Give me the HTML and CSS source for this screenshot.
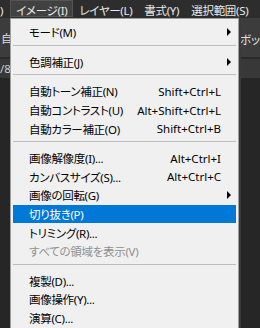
FILE: index.html
```html
<!DOCTYPE html>
<html lang="ja">
<head>
<meta charset="utf-8">
<link rel="stylesheet" href="styles.css">
</head>
<body>
<div class="menubar">
  <span class="mb-item mb-first">)</span>
  <span class="mb-item mb-active">イメージ(I)</span>
  <span class="mb-item">レイヤー(L)</span>
  <span class="mb-item">書式(Y)</span>
  <span class="mb-item">選択範囲(S)</span>
  <span class="mb-item">フィルター(T)</span>
</div>
<div class="optionsbar">
  <span class="opt-left">自動選択</span>
  <span class="opt-right">ボックスを表示</span>
</div>
<div class="tabbar"><span class="tab">/8</span></div>
<div class="canvas"></div>

<div class="menu">
  <div class="row"><span class="label">モード(M)</span><span class="sc"></span><span class="arrow"></span></div>
  <div class="sep"></div>
  <div class="row"><span class="label">色調補正(J)</span><span class="sc"></span><span class="arrow"></span></div>
  <div class="sep"></div>
  <div class="row"><span class="label">自動トーン補正(N)</span><span class="sc">Shift+Ctrl+L</span><span></span></div>
  <div class="row"><span class="label">自動コントラスト(U)</span><span class="sc">Alt+Shift+Ctrl+L</span><span></span></div>
  <div class="row"><span class="label">自動カラー補正(O)</span><span class="sc">Shift+Ctrl+B</span><span></span></div>
  <div class="sep"></div>
  <div class="row"><span class="label">画像解像度(I)...</span><span class="sc">Alt+Ctrl+I</span><span></span></div>
  <div class="row"><span class="label">カンバスサイズ(S)...</span><span class="sc">Alt+Ctrl+C</span><span></span></div>
  <div class="row"><span class="label">画像の回転(G)</span><span class="sc"></span><span class="arrow"></span></div>
  <div class="row active"><span class="label">切り抜き(P)</span><span class="sc"></span><span></span></div>
  <div class="row"><span class="label">トリミング(R)...</span><span class="sc"></span><span></span></div>
  <div class="row disabled"><span class="label">すべての領域を表示(V)</span><span class="sc"></span><span></span></div>
  <div class="sep"></div>
  <div class="row"><span class="label">複製(D)...</span><span class="sc"></span><span></span></div>
  <div class="row"><span class="label">画像操作(Y)...</span><span class="sc"></span><span></span></div>
  <div class="row"><span class="label">演算(C)...</span><span class="sc"></span><span></span></div>
</div>
</body>
</html>
```
FILE: styles.css
```css
html, body {
  margin: 0;
  padding: 0;
}
body {
  width: 260px;
  height: 328px;
  overflow: hidden;
  position: relative;
  background: #262626;
  font-family: "Noto Sans", "Noto Sans CJK JP", sans-serif;
  font-feature-settings: "palt" 1;
}
.menubar {
  height: 18px;
  background: #2d2d2d;
  display: flex;
  white-space: nowrap;
  overflow: hidden;
  color: #e8e8e8;
  font-size: 11.5px;
  letter-spacing: -0.3px;
  line-height: 18px;
}
.mb-item {
  padding: 2px 6px 0;
  height: 16px;
}
.mb-first {
  padding: 2px 7px 0 0;
}
.mb-active {
  background: #414141;
  box-shadow: inset 0 0 0 1px #555555;
  height: 15px;
}
.optionsbar {
  height: 39px;
  background: #3c3c3c;
  border-bottom: 2px solid #2a2a2a;
  display: grid;
  grid-template-columns: 240px auto;
  align-items: center;
  color: #e0e0e0;
  font-size: 11.5px;
  white-space: nowrap;
  overflow: hidden;
}
.opt-left {
  padding-left: 1px;
  overflow: hidden;
}
.opt-right {
  padding-top: 3px;
}
.tabbar {
  height: 19px;
  background: #383838;
  color: #d0d0d0;
  font-size: 11.5px;
  line-height: 19px;
  white-space: nowrap;
}
.menu {
  position: absolute;
  left: 10px;
  top: 18px;
  width: 229px;
  box-sizing: border-box;
  background: #f0f0f0;
  border: 1px solid #a0a0a0;
  padding: 4px 2px 10px;
  box-shadow: 2px 2px 0 #3a3a3a;
  font-size: 11.5px;
  color: #000;
}
.row {
  display: grid;
  grid-template-columns: 1fr auto 15px;
  align-items: center;
  height: 18.6px;
  padding-left: 16px;
  white-space: nowrap;
}
.label {
  letter-spacing: -0.3px;
}
.row.active {
  background: #0078d7;
  color: #fff;
}
.row.disabled {
  color: #8f8f8f;
}
.sc {
  font-family: "Noto Sans", sans-serif;
  font-size: 11.5px;
  text-align: right;
}
.arrow {
  justify-self: start;
  margin-left: 6px;
  width: 0;
  height: 0;
  border-left: 4px solid #000;
  border-top: 4px solid transparent;
  border-bottom: 4px solid transparent;
}
.sep {
  height: 1px;
  margin: 3px 0 7px;
  background: #bdbdbd;
}
```
